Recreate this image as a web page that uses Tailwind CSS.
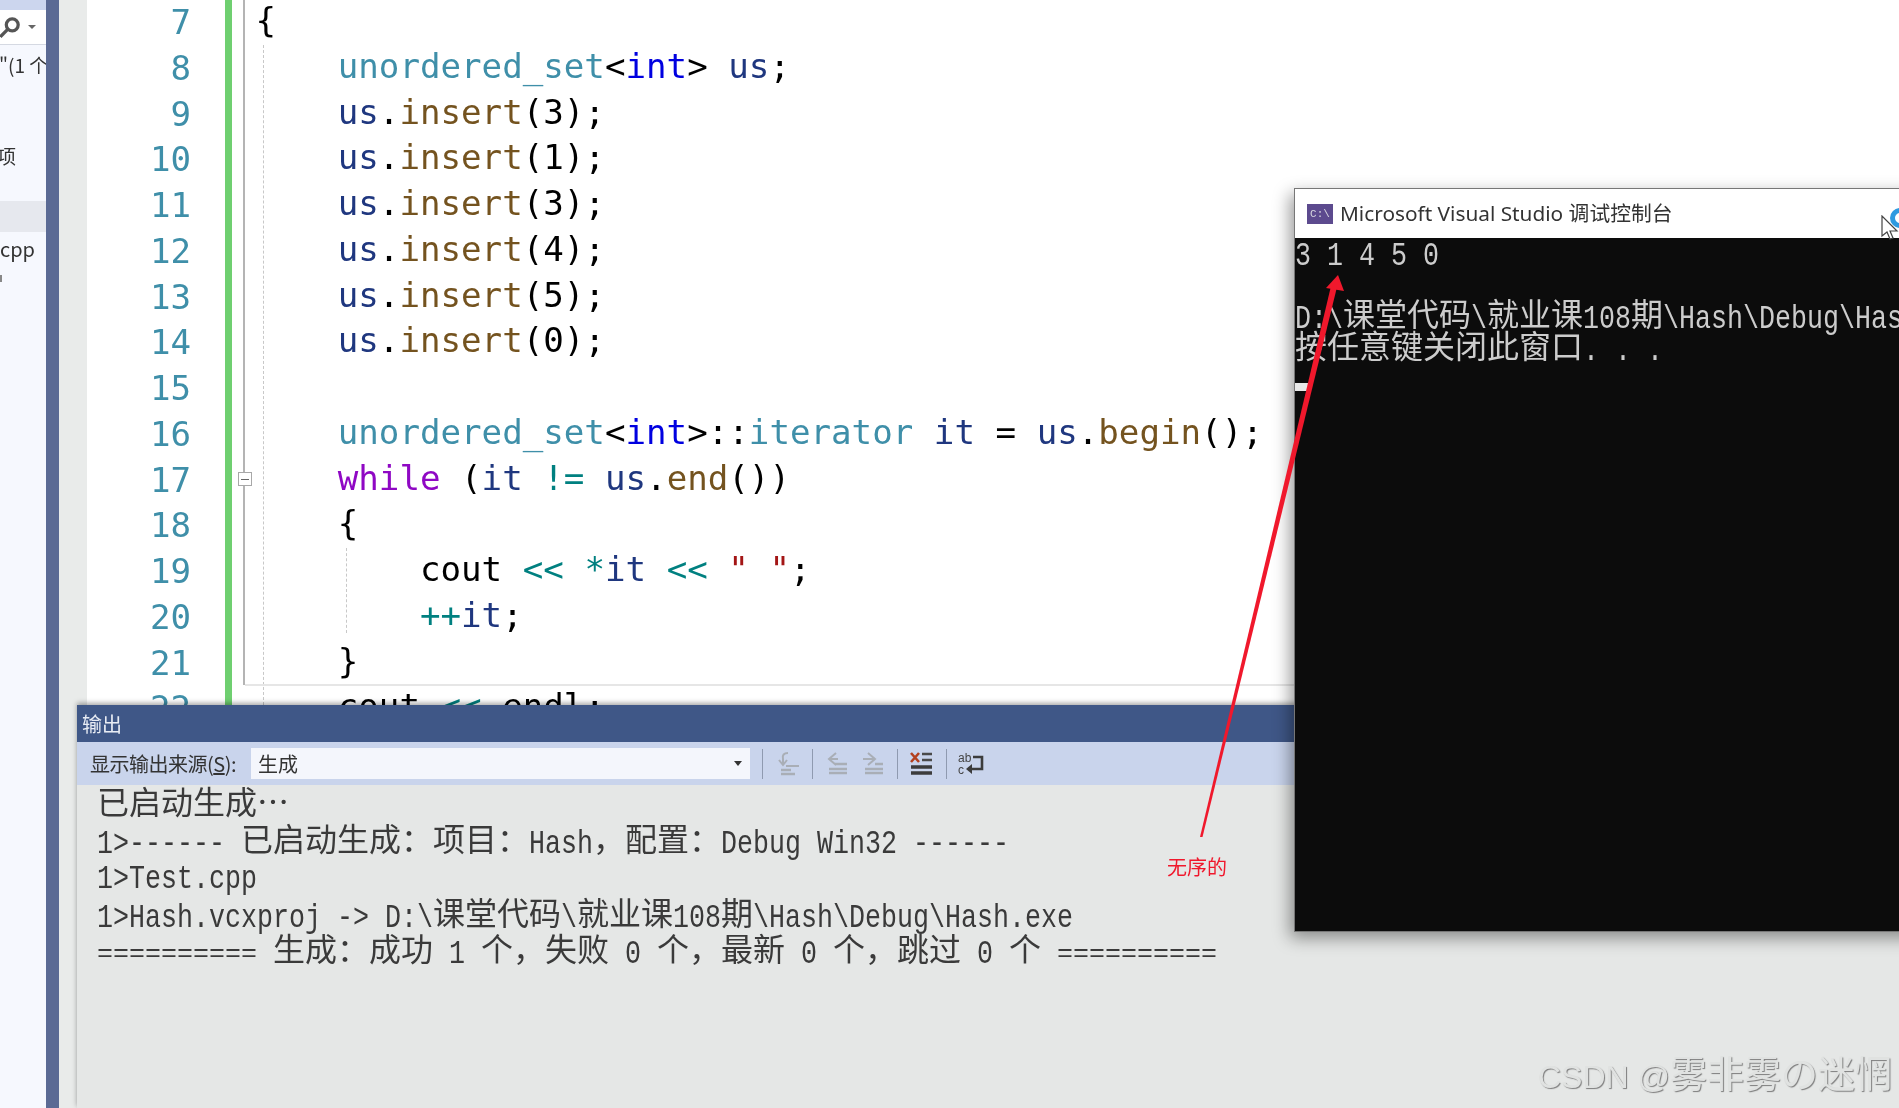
<!DOCTYPE html>
<html lang="zh-CN">
<head>
    <meta charset="UTF-8">
    <title>unordered_set - Visual Studio</title>
    <script src="https://cdn.jsdelivr.net/npm/@tailwindcss/browser@4"></script>
</head>
<body class="bg-white">
<div class="relative w-[1899px] h-[1108px] overflow-hidden flex bg-white blur-[0.4px] [font-family:'Noto_Sans_CJK_SC',sans-serif]">

    <!-- Solution explorer edge -->
    <aside class="w-[46px] shrink-0 bg-[#f6f8fe] overflow-hidden text-[19px] text-[#333]">
        <div class="h-[10px] bg-[#ccd6ee]"></div>
        <div class="h-[35px] bg-white border-b border-[#d5d9e2] flex items-center gap-[8px] pl-0">
            <svg width="26" height="26" viewBox="0 0 24 24" class="-ml-[4px] shrink-0" fill="none" stroke="#555" stroke-width="3"><circle cx="15" cy="10" r="5.5"/><path d="M11 14l-7 7"/></svg>
            <span class="w-0 h-0 border-x-[4px] border-x-transparent border-t-[4px] border-t-[#666] -ml-[2px] shrink-0"></span>
        </div>
        <div class="h-[40px] leading-[40px] whitespace-pre -ml-[1px]">"(1 个</div>
        <div class="h-[40px] leading-[40px] mt-[51px] -ml-[3px]">项</div>
        <div class="h-[31px] mt-[25px] bg-[#e6e8ee]"></div>
        <div class="h-[34px] leading-[34px] text-[20px]">cpp</div>
        <div class="w-[2px] h-[7px] bg-[#888] mt-[9px]"></div>
    </aside>
    <div class="w-[13px] shrink-0 bg-[#5b6a94]"></div>
    <div class="w-[28px] shrink-0 bg-[#e9ebea]"></div>

    <!-- Editor -->
    <main class="flex-1 flex items-start min-w-0 [font-family:'DejaVu_Sans_Mono',monospace] text-[34.15px] leading-[45.75px]">
        <div class="w-[138px] shrink-0 pr-[34px] text-right text-[#3f8fa9]">
            <div>7</div><div>8</div><div>9</div><div>10</div><div>11</div><div>12</div><div>13</div><div>14</div><div>15</div><div>16</div><div>17</div><div>18</div><div>19</div><div>20</div><div>21</div><div>22</div>
        </div>
        <div class="w-[7px] h-[705px] shrink-0 bg-[#6fcf70]"></div>
        <div class="relative w-[13px] h-[685px] shrink-0 border-r-2 border-[#b4b4b4]">
            <div class="absolute left-[6px] top-[472px] w-[14px] h-[14px] bg-white border border-[#a8a8a8] flex items-center justify-center">
                <span class="w-[8px] h-px bg-[#666]"></span>
            </div>
        </div>
        <div class="relative flex-1 pl-[10.5px] -mt-[2px] text-black [&>div]:whitespace-pre [&>div]:h-[45.75px]">
            <span class="absolute left-[18px] top-[47px] h-[660px] border-l border-dashed border-[#c8c8c8]"></span>
            <span class="absolute left-[101px] top-[550px] h-[85px] border-l border-dashed border-[#c8c8c8]"></span>
            <span class="absolute left-0 right-0 top-[686px] h-[2px] bg-[#e6e6e6]"></span>
            <div>{</div>
            <div>    <span class="text-[#3f8fa9]">unordered_set</span>&lt;<span class="text-[#0000e0]">int</span>&gt; <span class="text-[#1f377f]">us</span>;</div>
            <div>    <span class="text-[#1f377f]">us</span>.<span class="text-[#74531f]">insert</span>(3);</div>
            <div>    <span class="text-[#1f377f]">us</span>.<span class="text-[#74531f]">insert</span>(1);</div>
            <div>    <span class="text-[#1f377f]">us</span>.<span class="text-[#74531f]">insert</span>(3);</div>
            <div>    <span class="text-[#1f377f]">us</span>.<span class="text-[#74531f]">insert</span>(4);</div>
            <div>    <span class="text-[#1f377f]">us</span>.<span class="text-[#74531f]">insert</span>(5);</div>
            <div>    <span class="text-[#1f377f]">us</span>.<span class="text-[#74531f]">insert</span>(0);</div>
            <div> </div>
            <div>    <span class="text-[#3f8fa9]">unordered_set</span>&lt;<span class="text-[#0000e0]">int</span>&gt;::<span class="text-[#3f8fa9]">iterator</span> <span class="text-[#1f377f]">it</span> = <span class="text-[#1f377f]">us</span>.<span class="text-[#74531f]">begin</span>();</div>
            <div>    <span class="text-[#8f08c4]">while</span> (<span class="text-[#1f377f]">it</span> <span class="text-[#008080]">!=</span> <span class="text-[#1f377f]">us</span>.<span class="text-[#74531f]">end</span>())</div>
            <div>    {</div>
            <div>        cout <span class="text-[#008080]">&lt;&lt;</span> <span class="text-[#008080]">*</span><span class="text-[#1f377f]">it</span> <span class="text-[#008080]">&lt;&lt;</span> <span class="text-[#a31515]">" "</span>;</div>
            <div>        <span class="text-[#008080]">++</span><span class="text-[#1f377f]">it</span>;</div>
            <div>    }</div>
            <div>    cout <span class="text-[#008080]">&lt;&lt;</span> endl;</div>
        </div>
    </main>

    <!-- Output window -->
    <section class="absolute left-[77px] top-[705px] right-0 bottom-0 bg-[#e5e7e6] flex flex-col shadow-[0_-2px_5px_rgba(0,0,0,0.35)] [font-family:'Liberation_Mono','Noto_Sans_CJK_SC',monospace]">
        <div class="h-[37px] shrink-0 bg-[#3f5787] text-[#e8ecf4] text-[20px] leading-[37px] pl-[5px] [font-family:'Noto_Sans_CJK_SC',sans-serif]">输出</div>
        <div class="h-[43px] shrink-0 bg-[#c9d4ec] flex items-center text-[#333] [font-family:'Noto_Sans_CJK_SC',sans-serif]">
            <span class="w-[174px] pl-[13px] text-[20px] whitespace-pre tracking-[-0.5px]">显示输出来源(<span class="underline">S</span>):</span>
            <div class="w-[499px] h-[31px] bg-[#f4f6fc] flex items-center justify-between pl-[7px] pr-[8px] text-[20px]">
                <span>生成</span>
                <span class="w-0 h-0 border-x-[4px] border-x-transparent border-t-[5px] border-t-[#333]"></span>
            </div>
            <span class="w-px h-[30px] bg-[#8f9ab0] ml-[12px]"></span>
            <div class="w-[49px] flex justify-center">
                <svg width="26" height="26" viewBox="0 0 26 26" fill="none" stroke="#a9aeb6" stroke-width="2"><path d="M13 2c-4 0-6 2-5 6v5"/><path d="M4 9l4 5 4-5"/><path d="M11 15h13"/><path d="M6 19h10M6 23h14" stroke-width="2.5"/></svg>
            </div>
            <span class="w-px h-[30px] bg-[#8f9ab0]"></span>
            <div class="w-[84px] flex">
                <div class="w-[36px] ml-[6px] flex justify-center">
                    <svg width="24" height="26" viewBox="0 0 24 26" fill="none" stroke="#a9aeb6" stroke-width="2"><path d="M11 2L4 8l7 6" /><path d="M4 8h9"/><path d="M10 13h12M4 18h18M4 22h18" stroke-width="2.5"/></svg>
                </div>
                <div class="w-[36px] flex justify-center">
                    <svg width="24" height="26" viewBox="0 0 24 26" fill="none" stroke="#a9aeb6" stroke-width="2"><path d="M7 2l7 6-7 6"/><path d="M2 8h11"/><path d="M14 13h8M4 18h18M4 22h18" stroke-width="2.5"/></svg>
                </div>
            </div>
            <span class="w-px h-[30px] bg-[#8f9ab0]"></span>
            <div class="w-[48px] flex justify-center">
                <svg width="24" height="26" viewBox="0 0 24 26" fill="none"><path d="M1 2l8 9M9 2l-8 9" stroke="#b3401f" stroke-width="2.6"/><path d="M12 3h10M12 9h10" stroke="#4a4a4a" stroke-width="2.6"/><path d="M1 16h21M1 22h21" stroke="#3c3c3c" stroke-width="3.4"/></svg>
            </div>
            <span class="w-px h-[30px] bg-[#8f9ab0]"></span>
            <div class="w-[48px] flex justify-center">
                <svg width="28" height="28" viewBox="0 0 28 28" fill="none"><text x="1" y="12" font-family="Liberation Sans" font-size="12" fill="#444">ab</text><text x="1" y="24" font-family="Liberation Sans" font-size="12" fill="#444">c</text><path d="M16 7h9v12H11" stroke="#3c3c3c" stroke-width="2.6"/><path d="M15 14l-6 5 6 5z" fill="#3c3c3c"/></svg>
            </div>
        </div>
        <div class="pl-[20px] pt-[2px] text-[#3a3a3a] text-[26.67px] leading-[37px] [&>div]:whitespace-pre [&_span]:text-[32px] [&_i]:not-italic [&_i]:inline-block [&_i]:scale-y-[1.25]">
            <div class="h-[37px]"><span>已启动生成⋯</span></div>
            <div class="h-[37px]"><i>1&gt;------ </i><span>已启动生成：项目：</span><i>Hash</i><span>，配置：</span><i>Debug Win32 ------</i></div>
            <div class="h-[37px]"><i>1&gt;Test.cpp</i></div>
            <div class="h-[36px]"><i>1&gt;Hash.vcxproj -&gt; D:\</i><span>课堂代码</span><i>\</i><span>就业课</span><i>108</i><span>期</span><i>\Hash\Debug\Hash.exe</i></div>
            <div class="h-[37px]">========== <span>生成：成功</span> <i>1</i> <span>个，失败</span> <i>0</i> <span>个，最新</span> <i>0</i> <span>个，跳过</span> <i>0</i> <span>个</span> ==========</div>
        </div>
    </section>

    <!-- Debug console window -->
    <section class="absolute left-[1294px] top-[188px] w-[640px] h-[744px] flex flex-col bg-[#0c0c0c] border border-[#777] shadow-[-4px_6px_16px_rgba(0,0,0,0.4)]">
        <div class="h-[49px] shrink-0 bg-white flex items-center pl-[12px] gap-[7px] text-[20.8px] text-[#333] [font-family:'Noto_Sans','Noto_Sans_CJK_SC',sans-serif]">
            <span class="w-[26px] h-[20px] bg-[#5c4a8e] text-[#d8d8e0] text-[11px] leading-[20px] text-center [font-family:'Liberation_Mono',monospace]">C:\</span>
            <span class="whitespace-pre">Microsoft Visual Studio 调试控制台</span>
        </div>
        <div class="text-[#cccccc] text-[26.67px] leading-[32px] [&>div]:whitespace-pre [&_span]:text-[32px] [&_i]:not-italic [&_i]:inline-block [&_i]:scale-y-[1.25] [font-family:'Liberation_Mono','Noto_Sans_CJK_SC',monospace]">
            <div class="h-[32px] pt-[2px]"><i>3 1 4 5 0</i></div>
            <div class="h-[32px]"></div>
            <div class="h-[32px]"><i>D:\</i><span>课堂代码</span><i>\</i><span>就业课</span><i>108</i><span>期</span><i>\Hash\Debug\Hash.exe</i></div>
            <div class="h-[32px]"><span>按任意键关闭此窗口</span><i>. . .</i></div>
            <div class="w-[15px] h-[8px] mt-[17px] bg-[#e8e8e8]"></div>
        </div>
    </section>

    <!-- Annotation -->
    <svg class="absolute inset-0" width="1899" height="1108" viewBox="0 0 1899 1108">
        <polygon points="1200,837 1202.5,837 1337,287 1331,286" fill="#f0182c"/>
        <polygon points="1338,275 1326,288 1344,291" fill="#f0182c"/>
    </svg>
    <span class="absolute left-[1167px] top-[853px] text-[20px] leading-[28px] text-[#f0182c]">无序的</span>

    <!-- Busy cursor -->
    <div class="absolute left-[1890px] top-[208px] w-[20px] h-[20px] rounded-full border-[5px] border-[#2f9ae0]"></div>
    <svg class="absolute left-[1881px] top-[215px]" width="18" height="26" viewBox="0 0 18 26"><path d="M1 1v20l5-4 3 7 3-1-3-7h7z" fill="#fff" stroke="#444" stroke-width="1.2"/></svg>

    <!-- Watermark -->
    <div class="absolute left-[1538px] top-[1051px] h-[50px] leading-[50px] whitespace-pre text-[32px] text-[#e0e2e1] [text-shadow:1px_1px_1px_#7d7d7d] [font-family:'Liberation_Sans','Noto_Sans_CJK_SC',sans-serif]">CSDN @<span class="text-[37px]">雾非雾の迷惘</span></div>
</div>
</body>
</html>
